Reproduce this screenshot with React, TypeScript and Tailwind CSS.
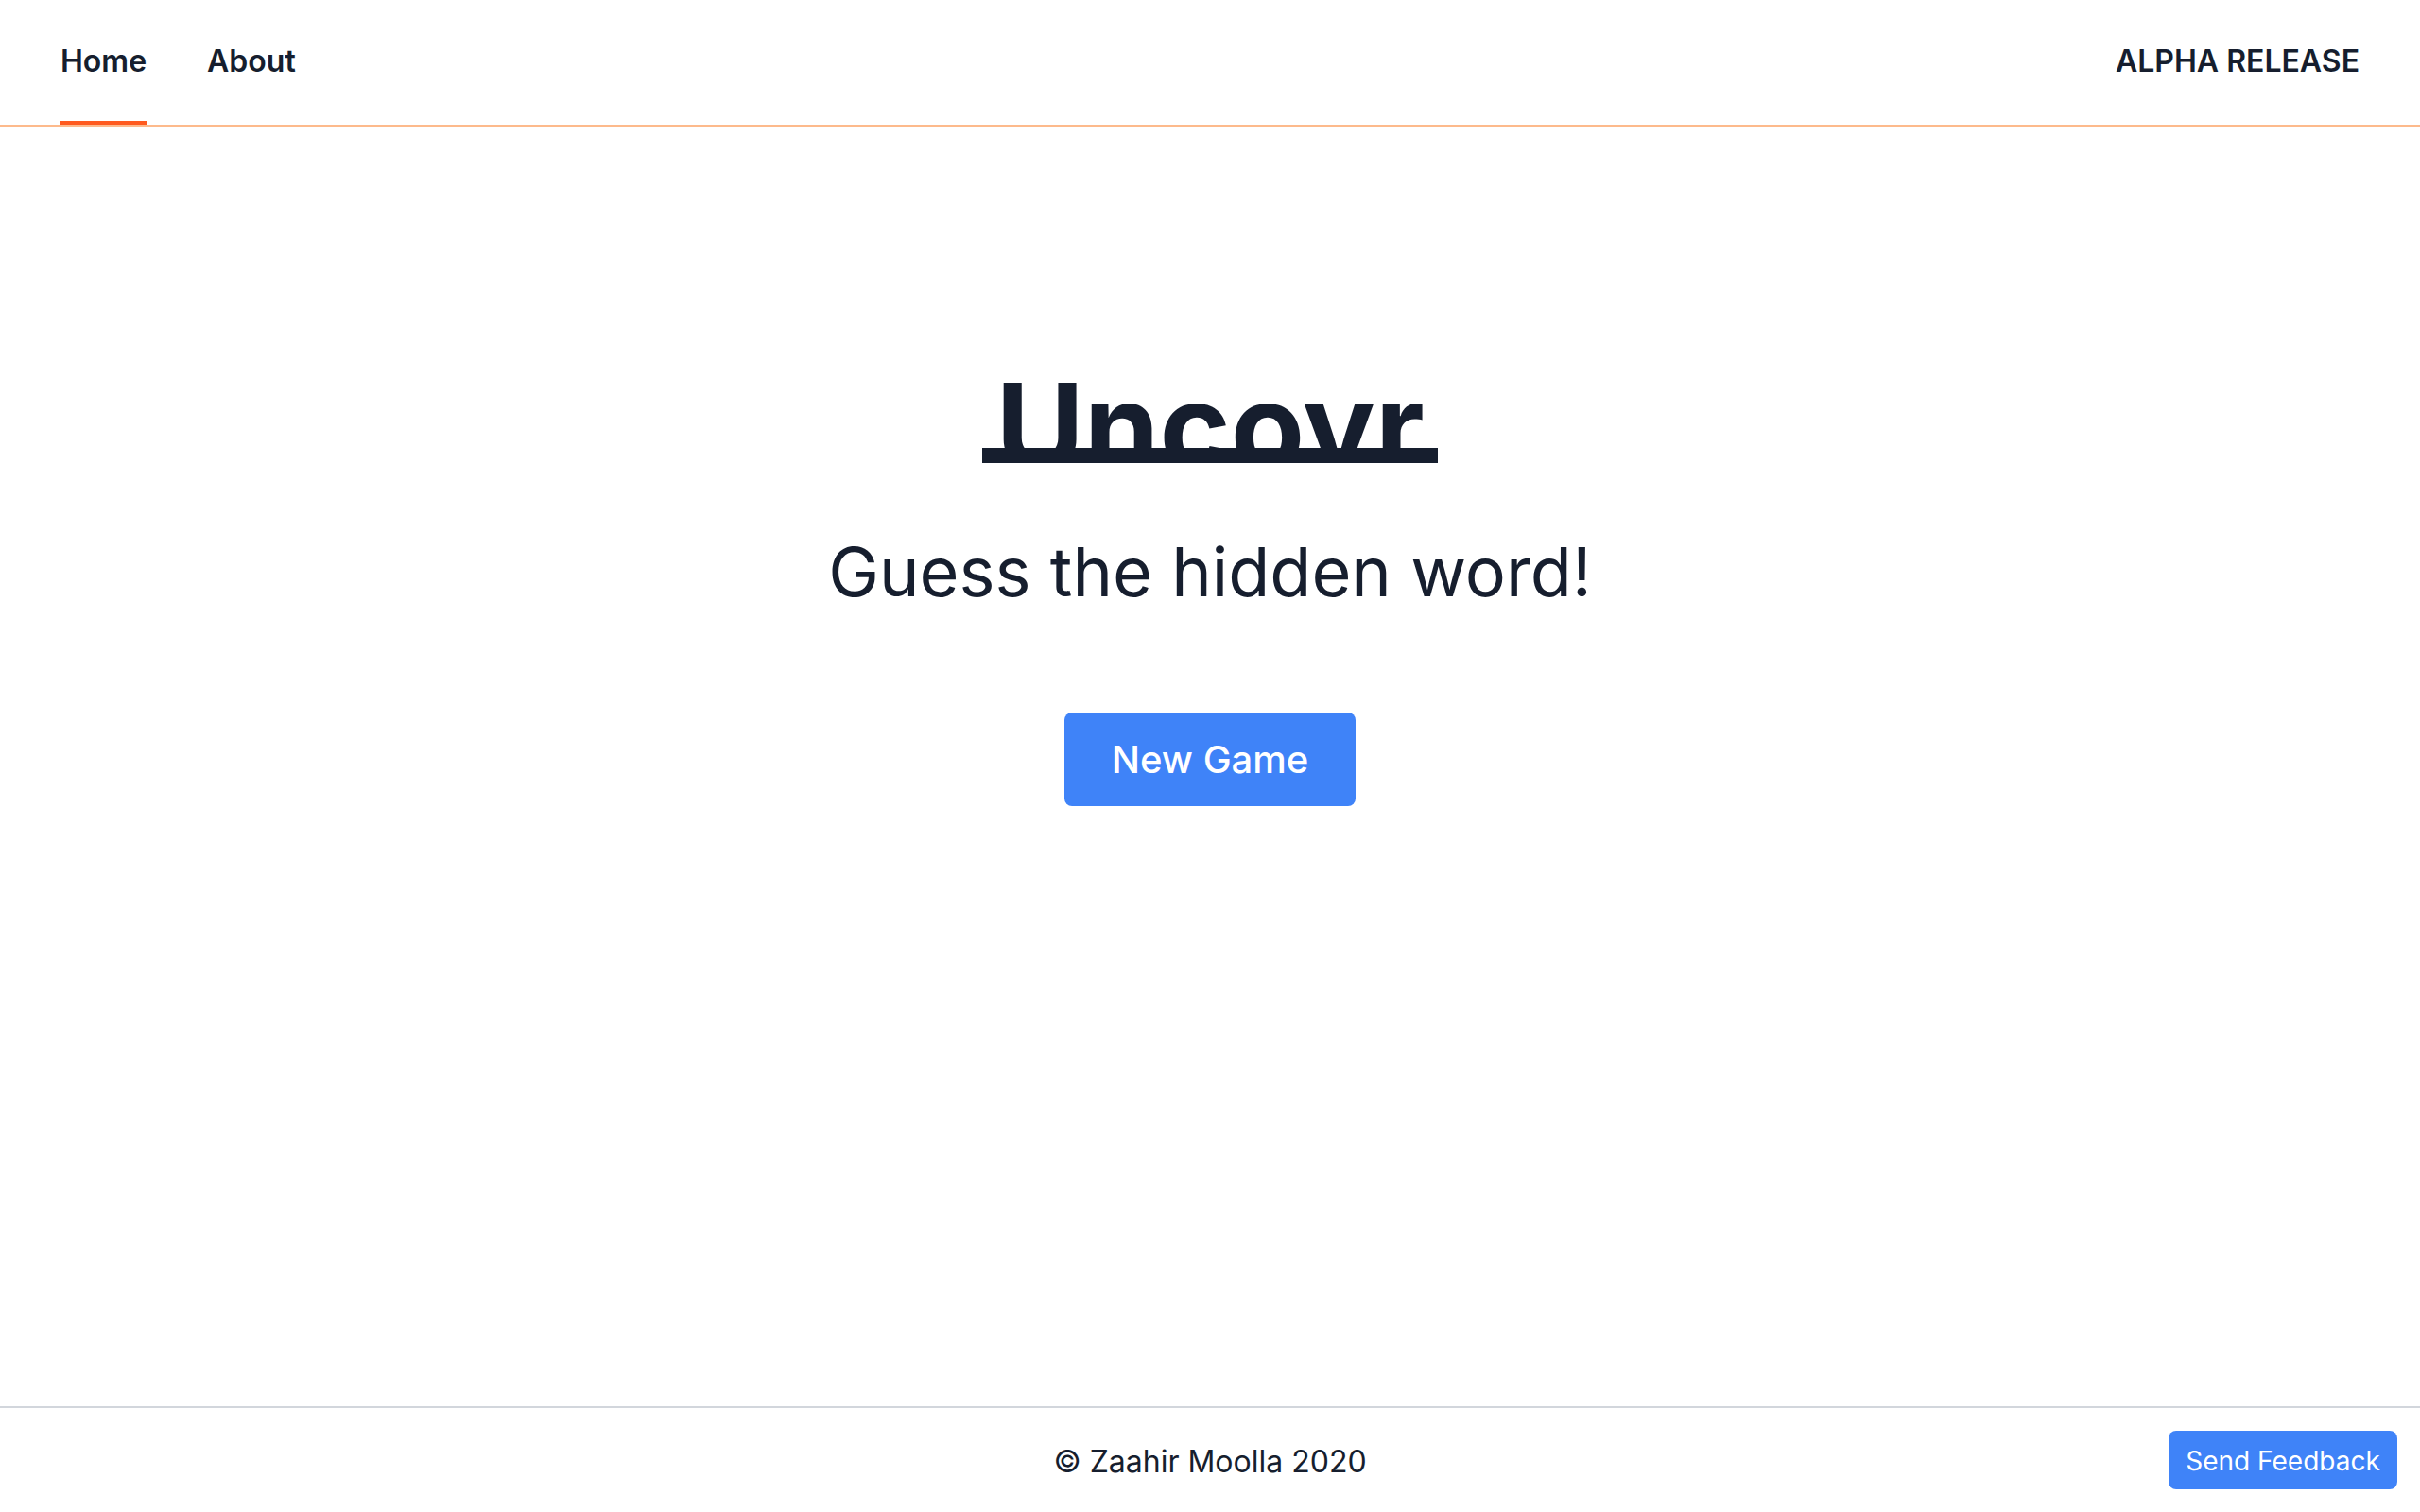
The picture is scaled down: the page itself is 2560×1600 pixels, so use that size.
import React from "react";

export default function App() {
  return (
    <div className="min-h-screen flex flex-col bg-white text-[#161e2e]" style={{ fontFamily: "Inter, 'Noto Sans', sans-serif" }}>
      <nav className="h-[134px] border-b-2 border-[#fdba8c] px-[64px] flex justify-between">
        <div className="flex gap-[64px] h-full">
          <a className="h-full flex items-center pt-[2px] border-b-4 border-[#ff5a1f] text-[32px] leading-[48px] font-semibold">Home</a>
          <a className="h-full flex items-center pt-[2px] border-b-4 border-transparent text-[32px] leading-[48px] font-semibold">About</a>
        </div>
        <div className="h-full flex items-center pt-[2px] border-b-4 border-transparent text-[32px] leading-[48px] font-semibold">ALPHA RELEASE</div>
      </nav>
      <main className="flex-1 flex flex-col items-center pt-[254px]">
        <div className="h-[102px] overflow-hidden border-b-[16px] border-[#161e2e] px-[14px]">
          <h1 className="text-[128px] leading-none font-bold">Uncovr</h1>
        </div>
        <p className="mt-[75px] text-[72px] leading-[80px] font-normal">Guess the hidden word!</p>
        <button className="mt-[109px] w-[308px] h-[99px] rounded-[8px] bg-[#3f83f8] text-white text-[40px] leading-[56px] font-medium">New Game</button>
      </main>
      <footer className="h-[112px] border-t-2 border-[#d2d6dc] flex items-center justify-center pt-[3px]">
        <span className="text-[32px] leading-[48px]">© Zaahir Moolla 2020</span>
      </footer>
      <button className="fixed right-[24px] bottom-[24px] h-[62px] w-[242px] pt-[2px] rounded-[8px] bg-[#3f83f8] text-white text-[28px] leading-[40px]">Send Feedback</button>
    </div>
  );
}
